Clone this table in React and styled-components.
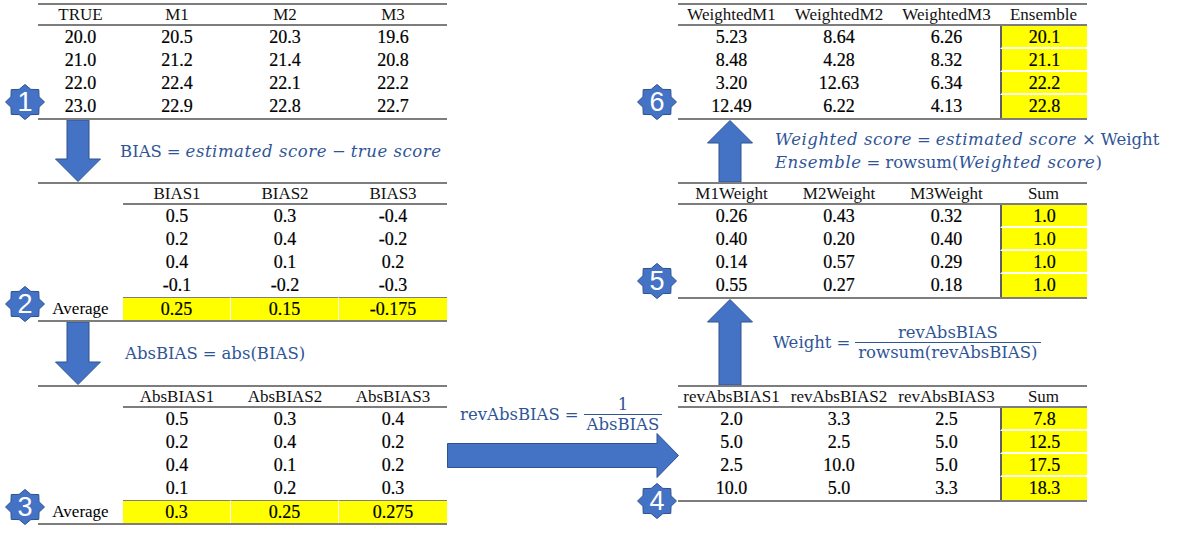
import React from "react";
import styled, { createGlobalStyle } from "styled-components";

const LINE = "#7d7d7d";
const BLUE = "#4472C4";
const BLUE_DARK = "#2F528F";
const INK = "#2F5597";
const YELLOW = "#FFFF00";

const GlobalStyle = createGlobalStyle`
  html, body { margin: 0; padding: 0; background: #fff; }
  body { font-family: "Liberation Serif", "Times New Roman", serif; }
`;

const Page = styled.div`
  display: flex;
  align-items: stretch;
  box-sizing: border-box;
  width: 1181px;
  height: 539px;
  padding: 3px 0 0 38px;
  overflow: hidden;
`;

const Column = styled.div`
  flex: none;
  width: 409px;
  display: flex;
  flex-direction: column;
`;

const Middle = styled.div`
  flex: none;
  width: 231px;
  display: flex;
  flex-direction: column;
  justify-content: flex-end;
  align-items: flex-start;
  padding-bottom: 61px;
`;

const Grid = styled.div`
  position: relative;
  display: grid;
  grid-template-columns: ${(p) => p.$cols};
  border-top: 2px solid ${LINE};
  border-bottom: 2px solid ${LINE};
  color: #000;
  font-size: 18px;
`;

const Head = styled.div`
  height: 19px;
  line-height: 20px;
  text-align: center;
  font-size: 17px;
  color: #111;
  white-space: nowrap;
  border-bottom: 2px solid ${(p) => (p.$blank ? "transparent" : LINE)};
`;

const Cell = styled.div`
  box-sizing: border-box;
  height: 23px;
  line-height: 23px;
  text-align: center;
  white-space: nowrap;
  -webkit-text-stroke: 0.2px #000;
  ${(p) =>
    p.$sum &&
    `background: ${YELLOW};
     border-left: 2px solid #5f5f5f;
     border-bottom: ${p.$last ? "none" : "2px solid #fff"};
     line-height: 22px;`}
`;

const AvgLabel = styled.div`
  height: 23px;
  line-height: 24px;
  text-align: center;
  font-size: 17px;
`;

const AvgCell = styled.div`
  box-sizing: border-box;
  height: 23px;
  line-height: 22px;
  text-align: center;
  background: ${YELLOW};
  border-top: 1px solid ${LINE};
  border-right: ${(p) => (p.$last ? "none" : "1px solid #fff")};
  -webkit-text-stroke: 0.2px #000;
`;

const BadgeBox = styled.div`
  position: absolute;
  left: ${(p) => p.$left}px;
  bottom: ${(p) => p.$bottom}px;
  width: 40px;
  height: 36px;
  display: flex;
  align-items: center;
  justify-content: center;
`;

const BadgeShape = styled.svg`
  position: absolute;
  inset: 0;
`;

const BadgeNum = styled.span`
  position: relative;
  font-family: "Liberation Sans", Arial, sans-serif;
  font-size: 27px;
  line-height: 1;
  color: #fff;
  margin-top: 1px;
`;

const Step = styled.div`
  flex: none;
  display: flex;
  align-items: center;
  height: ${(p) => p.$h}px;
  padding-left: ${(p) => p.$indent}px;
  gap: ${(p) => p.$gap}px;
`;

const Formula = styled.div`
  font-family: "DejaVu Serif", serif;
  font-size: 16.5px;
  color: ${INK};
  white-space: nowrap;
  display: flex;
  align-items: center;
  margin-left: ${(p) => p.$ml || 0}px;
`;

const FormulaLines = styled.div`
  display: flex;
  flex-direction: column;
  gap: 4px;
`;

const Var = styled.span`
  font-style: italic;
  letter-spacing: 0.55px;
`;

const Op = styled.span`
  margin: 0 0.3em;
`;

const Frac = styled.span`
  display: inline-flex;
  flex-direction: column;
  align-items: stretch;
  text-align: center;
  line-height: 17px;
`;

const Num = styled.span`
  padding: 0 3px 1px;
  border-bottom: 1.5px solid ${INK};
`;

const Den = styled.span`
  padding: 1px 3px 0;
`;

const starPoints = (() => {
  const pts = [];
  const cx = 20, cy = 18, R = 19.5, r = 15.2;
  for (let i = 0; i < 16; i++) {
    const a = ((-90 + i * 22.5) * Math.PI) / 180;
    const rad = i % 2 === 0 ? R : r;
    pts.push(`${(cx + rad * Math.cos(a)).toFixed(2)},${(cy + rad * Math.sin(a) * 0.9).toFixed(2)}`);
  }
  return pts.join(" ");
})();

function Badge({ n, left, bottom }) {
  return (
    <BadgeBox $left={left} $bottom={bottom}>
      <BadgeShape width="40" height="36" viewBox="0 0 40 36">
        <polygon points={starPoints} fill={BLUE} stroke={BLUE_DARK} strokeWidth="1" />
      </BadgeShape>
      <BadgeNum>{n}</BadgeNum>
    </BadgeBox>
  );
}

function Arrow({ dir, h }) {
  if (dir === "right") {
    const w = 232, H = 45, s = 24, hw = 22;
    const y1 = (H - s) / 2, y2 = (H + s) / 2;
    const pts = `0.5,${y1} ${w - hw},${y1} ${w - hw},0.5 ${w - 0.5},${H / 2} ${w - hw},${H - 0.5} ${w - hw},${y2} 0.5,${y2}`;
    return (
      <svg width={w} height={H} viewBox={`0 0 ${w} ${H}`}>
        <polygon points={pts} fill={BLUE} stroke={BLUE_DARK} strokeWidth="1" />
      </svg>
    );
  }
  const w = 46, s = 22, hh = 23;
  const x1 = (w - s) / 2, x2 = (w + s) / 2;
  let pts;
  if (dir === "down") {
    pts = `${x1},0 ${x2},0 ${x2},${h - hh} ${w - 0.5},${h - hh} ${w / 2},${h - 0.5} 0.5,${h - hh} ${x1},${h - hh}`;
  } else {
    pts = `${w / 2},0.5 ${w - 0.5},${hh} ${x2},${hh} ${x2},${h} ${x1},${h} ${x1},${hh} 0.5,${hh}`;
  }
  return (
    <svg width={w} height={h} viewBox={`0 0 ${w} ${h}`} style={{ flex: "none" }}>
      <polygon points={pts} fill={BLUE} stroke={BLUE_DARK} strokeWidth="1" />
    </svg>
  );
}

const LEFT_COLS = "85px 108px 108px 108px";
const RIGHT_COLS = "107px 108px 107px 87px";

function LeftTable({ head, rows, avg, badge, blankFirst }) {
  return (
    <Grid $cols={LEFT_COLS}>
      {blankFirst && <Head $blank />}
      {head.map((h) => (
        <Head key={h}>{h}</Head>
      ))}
      {rows.map((r, i) => (
        <React.Fragment key={i}>
          {blankFirst && <Cell />}
          {r.map((v, j) => (
            <Cell key={j}>{v}</Cell>
          ))}
        </React.Fragment>
      ))}
      {avg && (
        <>
          <AvgLabel>Average</AvgLabel>
          {avg.map((v, j) => (
            <AvgCell key={j} $last={j === avg.length - 1}>
              {v}
            </AvgCell>
          ))}
        </>
      )}
      <Badge n={badge} left={-33} bottom={-2} />
    </Grid>
  );
}

function RightTable({ head, rows, badge, badgeBottom = -2 }) {
  return (
    <Grid $cols={RIGHT_COLS}>
      {head.map((h) => (
        <Head key={h}>{h}</Head>
      ))}
      {rows.map((r, i) => (
        <React.Fragment key={i}>
          {r.map((v, j) => (
            <Cell key={j} $sum={j === r.length - 1} $last={i === rows.length - 1}>
              {v}
            </Cell>
          ))}
        </React.Fragment>
      ))}
      <Badge n={badge} left={-41} bottom={badgeBottom} />
    </Grid>
  );
}

const t1 = {
  head: ["TRUE", "M1", "M2", "M3"],
  rows: [
    ["20.0", "20.5", "20.3", "19.6"],
    ["21.0", "21.2", "21.4", "20.8"],
    ["22.0", "22.4", "22.1", "22.2"],
    ["23.0", "22.9", "22.8", "22.7"],
  ],
};
const t2 = {
  head: ["BIAS1", "BIAS2", "BIAS3"],
  rows: [
    ["0.5", "0.3", "-0.4"],
    ["0.2", "0.4", "-0.2"],
    ["0.4", "0.1", "0.2"],
    ["-0.1", "-0.2", "-0.3"],
  ],
  avg: ["0.25", "0.15", "-0.175"],
};
const t3 = {
  head: ["AbsBIAS1", "AbsBIAS2", "AbsBIAS3"],
  rows: [
    ["0.5", "0.3", "0.4"],
    ["0.2", "0.4", "0.2"],
    ["0.4", "0.1", "0.2"],
    ["0.1", "0.2", "0.3"],
  ],
  avg: ["0.3", "0.25", "0.275"],
};
const t4 = {
  head: ["revAbsBIAS1", "revAbsBIAS2", "revAbsBIAS3", "Sum"],
  rows: [
    ["2.0", "3.3", "2.5", "7.8"],
    ["5.0", "2.5", "5.0", "12.5"],
    ["2.5", "10.0", "5.0", "17.5"],
    ["10.0", "5.0", "3.3", "18.3"],
  ],
};
const t5 = {
  head: ["M1Weight", "M2Weight", "M3Weight", "Sum"],
  rows: [
    ["0.26", "0.43", "0.32", "1.0"],
    ["0.40", "0.20", "0.40", "1.0"],
    ["0.14", "0.57", "0.29", "1.0"],
    ["0.55", "0.27", "0.18", "1.0"],
  ],
};
const t6 = {
  head: ["WeightedM1", "WeightedM2", "WeightedM3", "Ensemble"],
  rows: [
    ["5.23", "8.64", "6.26", "20.1"],
    ["8.48", "4.28", "8.32", "21.1"],
    ["3.20", "12.63", "6.34", "22.2"],
    ["12.49", "6.22", "4.13", "22.8"],
  ],
};

export default function App() {
  return (
    <>
      <GlobalStyle />
      <Page>
        <Column>
          <LeftTable {...t1} badge="1" />
          <Step $h={62} $indent={17} $gap={19}>
            <Arrow dir="down" h={62} />
            <Formula>
              BIAS<Op>=</Op>
              <Var>estimated score</Var>
              <Op>−</Op>
              <Var>true score</Var>
            </Formula>
          </Step>
          <LeftTable {...t2} blankFirst badge="2" />
          <Step $h={63} $indent={17} $gap={24}>
            <Arrow dir="down" h={63} />
            <Formula>
              AbsBIAS<Op>=</Op>abs(BIAS)
            </Formula>
          </Step>
          <LeftTable {...t3} blankFirst badge="3" />
        </Column>
        <Middle>
          <Formula $ml={13}>
            revAbsBIAS<Op>=</Op>
            <Frac>
              <Num>1</Num>
              <Den>AbsBIAS</Den>
            </Frac>
          </Formula>
          <Arrow dir="right" />
        </Middle>
        <Column>
          <RightTable {...t6} badge="6" />
          <Step $h={62} $indent={29} $gap={22}>
            <Arrow dir="up" h={62} />
            <FormulaLines>
              <Formula>
                <Var>Weighted score</Var>
                <Op>=</Op>
                <Var>estimated score</Var>
                <Op>×</Op>Weight
              </Formula>
              <Formula>
                <Var>Ensemble</Var>
                <Op>=</Op>rowsum(<Var>Weighted score</Var>)
              </Formula>
            </FormulaLines>
          </Step>
          <RightTable {...t5} badge="5" />
          <Step $h={86} $indent={29} $gap={20}>
            <Arrow dir="up" h={86} />
            <Formula>
              Weight<Op>=</Op>
              <Frac>
                <Num>revAbsBIAS</Num>
                <Den>rowsum(revAbsBIAS)</Den>
              </Frac>
            </Formula>
          </Step>
          <RightTable {...t4} badge="4" badgeBottom={-19} />
        </Column>
      </Page>
    </>
  );
}
